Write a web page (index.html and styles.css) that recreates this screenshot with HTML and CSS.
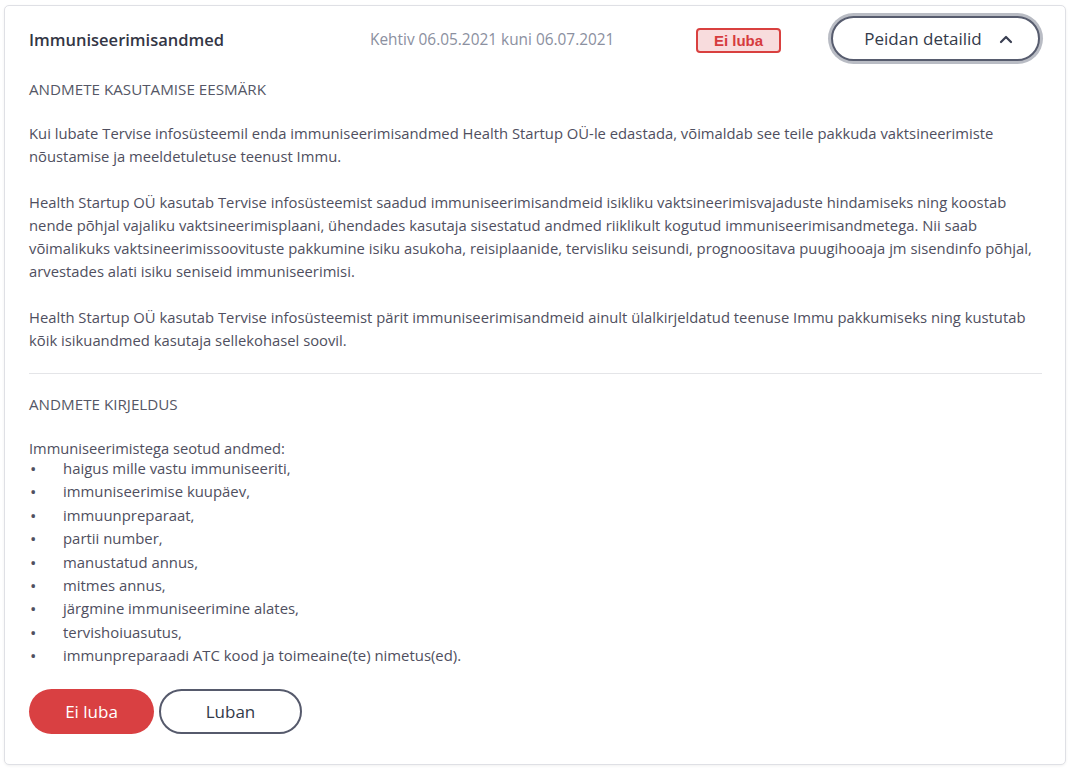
FILE: index.html
```html
<!DOCTYPE html>
<html lang="et">
<head>
<meta charset="utf-8">
<title>Immuniseerimisandmed</title>
<link rel="stylesheet" href="styles.css">
</head>
<body>
<div class="card">
  <div class="header">
    <div class="title">Immuniseerimisandmed</div>
    <div class="validity">Kehtiv 06.05.2021 kuni 06.07.2021</div>
    <div class="badge">Ei luba</div>
    <button class="toggle">Peidan detailid
      <svg class="chev" width="14" height="10" viewBox="0 0 14 10"><path d="M2 8 L7 3 L12 8" fill="none" stroke="#3a3f52" stroke-width="2.2" stroke-linecap="round" stroke-linejoin="round"/></svg>
    </button>
  </div>

  <section class="section">
    <h3 class="section-title">ANDMETE KASUTAMISE EESMÄRK</h3>
    <p class="text">Kui lubate Tervise infosüsteemil enda immuniseerimisandmed Health Startup OÜ-le edastada, võimaldab see teile pakkuda vaktsineerimiste<br>nõustamise ja meeldetuletuse teenust Immu.</p>
    <p class="text">Health Startup OÜ kasutab Tervise infosüsteemist saadud immuniseerimisandmeid isikliku vaktsineerimisvajaduste hindamiseks ning koostab<br>nende põhjal vajaliku vaktsineerimisplaani, ühendades kasutaja sisestatud andmed riiklikult kogutud immuniseerimisandmetega. Nii saab<br>võimalikuks vaktsineerimissoovituste pakkumine isiku asukoha, reisiplaanide, tervisliku seisundi, prognoositava puugihooaja jm sisendinfo põhjal,<br>arvestades alati isiku seniseid immuniseerimisi.</p>
    <p class="text">Health Startup OÜ kasutab Tervise infosüsteemist pärit immuniseerimisandmeid ainult ülalkirjeldatud teenuse Immu pakkumiseks ning kustutab<br>kõik isikuandmed kasutaja sellekohasel soovil.</p>
  </section>

  <hr class="divider">

  <section class="section">
    <h3 class="section-title">ANDMETE KIRJELDUS</h3>
    <p class="text list-intro">Immuniseerimistega seotud andmed:</p>
    <ul class="list">
      <li>haigus mille vastu immuniseeriti,</li>
      <li>immuniseerimise kuupäev,</li>
      <li>immuunpreparaat,</li>
      <li>partii number,</li>
      <li>manustatud annus,</li>
      <li>mitmes annus,</li>
      <li>järgmine immuniseerimine alates,</li>
      <li>tervishoiuasutus,</li>
      <li>immunpreparaadi ATC kood ja toimeaine(te) nimetus(ed).</li>
    </ul>
  </section>

  <div class="actions">
    <button class="btn btn-deny">Ei luba</button>
    <button class="btn btn-allow">Luban</button>
  </div>
</div>
</body>
</html>
```

FILE: styles.css
```css
html, body {
  margin: 0;
  padding: 0;
  background: #ffffff;
}

body {
  font-family: "Open Sans", "Noto Sans", sans-serif;
  color: #4f4f60;
  padding: 5px 6px 4px 4px;
}

.card {
  border: 1px solid #dfe0e5;
  border-radius: 5px;
  box-shadow: 0 1px 3px rgba(0, 0, 0, 0.06);
  padding: 10px 23px 30px 24px;
  background: #fff;
}

.header {
  display: flex;
  align-items: center;
  height: 45px;
}

.title {
  width: 341px;
  font-size: 16.5px;
  font-weight: 600;
  color: #333645;
  position: relative;
  top: 1px;
}

.validity {
  width: 326px;
  font-size: 15.4px;
  color: #8b90a0;
  position: relative;
  top: 1px;
}

.badge {
  box-sizing: border-box;
  width: 85px;
  height: 25px;
  border: 2px solid #d9403f;
  border-radius: 4px;
  background: #f8dcdd;
  color: #d63b3d;
  font-family: "Liberation Sans", Arial, sans-serif;
  font-weight: 700;
  font-size: 15px;
  display: flex;
  align-items: center;
  justify-content: center;
  position: relative;
  top: 2px;
}

.toggle {
  margin-left: auto;
  margin-right: 2px;
  box-sizing: border-box;
  width: 209px;
  height: 45px;
  border: 2px solid #575c6e;
  border-radius: 23px;
  box-shadow: 0 0 0 3px #b9bcc4;
  background: #fff;
  color: #333a4a;
  font-family: "Open Sans", sans-serif;
  font-size: 17px;
  display: flex;
  align-items: center;
  justify-content: center;
  gap: 17px;
  padding: 0 0 0 6px;
}

.chev {
  display: block;
}

.section {
  margin: 0;
}

.section-title {
  margin: 17px 0 21px;
  font-size: 15.2px;
  font-weight: 400;
  line-height: 23px;
  color: #555766;
}

.text {
  margin: 0 0 23px;
  font-size: 14.8px;
  line-height: 23px;
}

.divider {
  border: 0;
  border-top: 1px solid #e4e5e8;
  margin: -2px 0 0;
}

.section + .divider + .section .section-title {
  margin-top: 19px;
}

.list-intro {
  margin: 0;
  font-size: 14.7px;
}

.list {
  list-style: none;
  margin: -3px 0 0;
  padding: 0;
  font-size: 14.9px;
  line-height: 23.4px;
}

.list li {
  position: relative;
  padding-left: 34px;
}

.list li::before {
  content: "•";
  position: absolute;
  left: 1px;
  top: 0;
  font-size: 17px;
  color: #4f4f60;
}

.actions {
  display: flex;
  gap: 5px;
  margin-top: 21px;
}

.btn {
  box-sizing: border-box;
  height: 45px;
  border-radius: 23px;
  font-family: "Open Sans", sans-serif;
  font-size: 17px;
  cursor: pointer;
}

.btn-deny {
  width: 125px;
  background: #d94042;
  border: 0;
  color: #fff;
}

.btn-allow {
  width: 143px;
  background: #fff;
  border: 2px solid #565a6c;
  color: #333a4a;
}
```
